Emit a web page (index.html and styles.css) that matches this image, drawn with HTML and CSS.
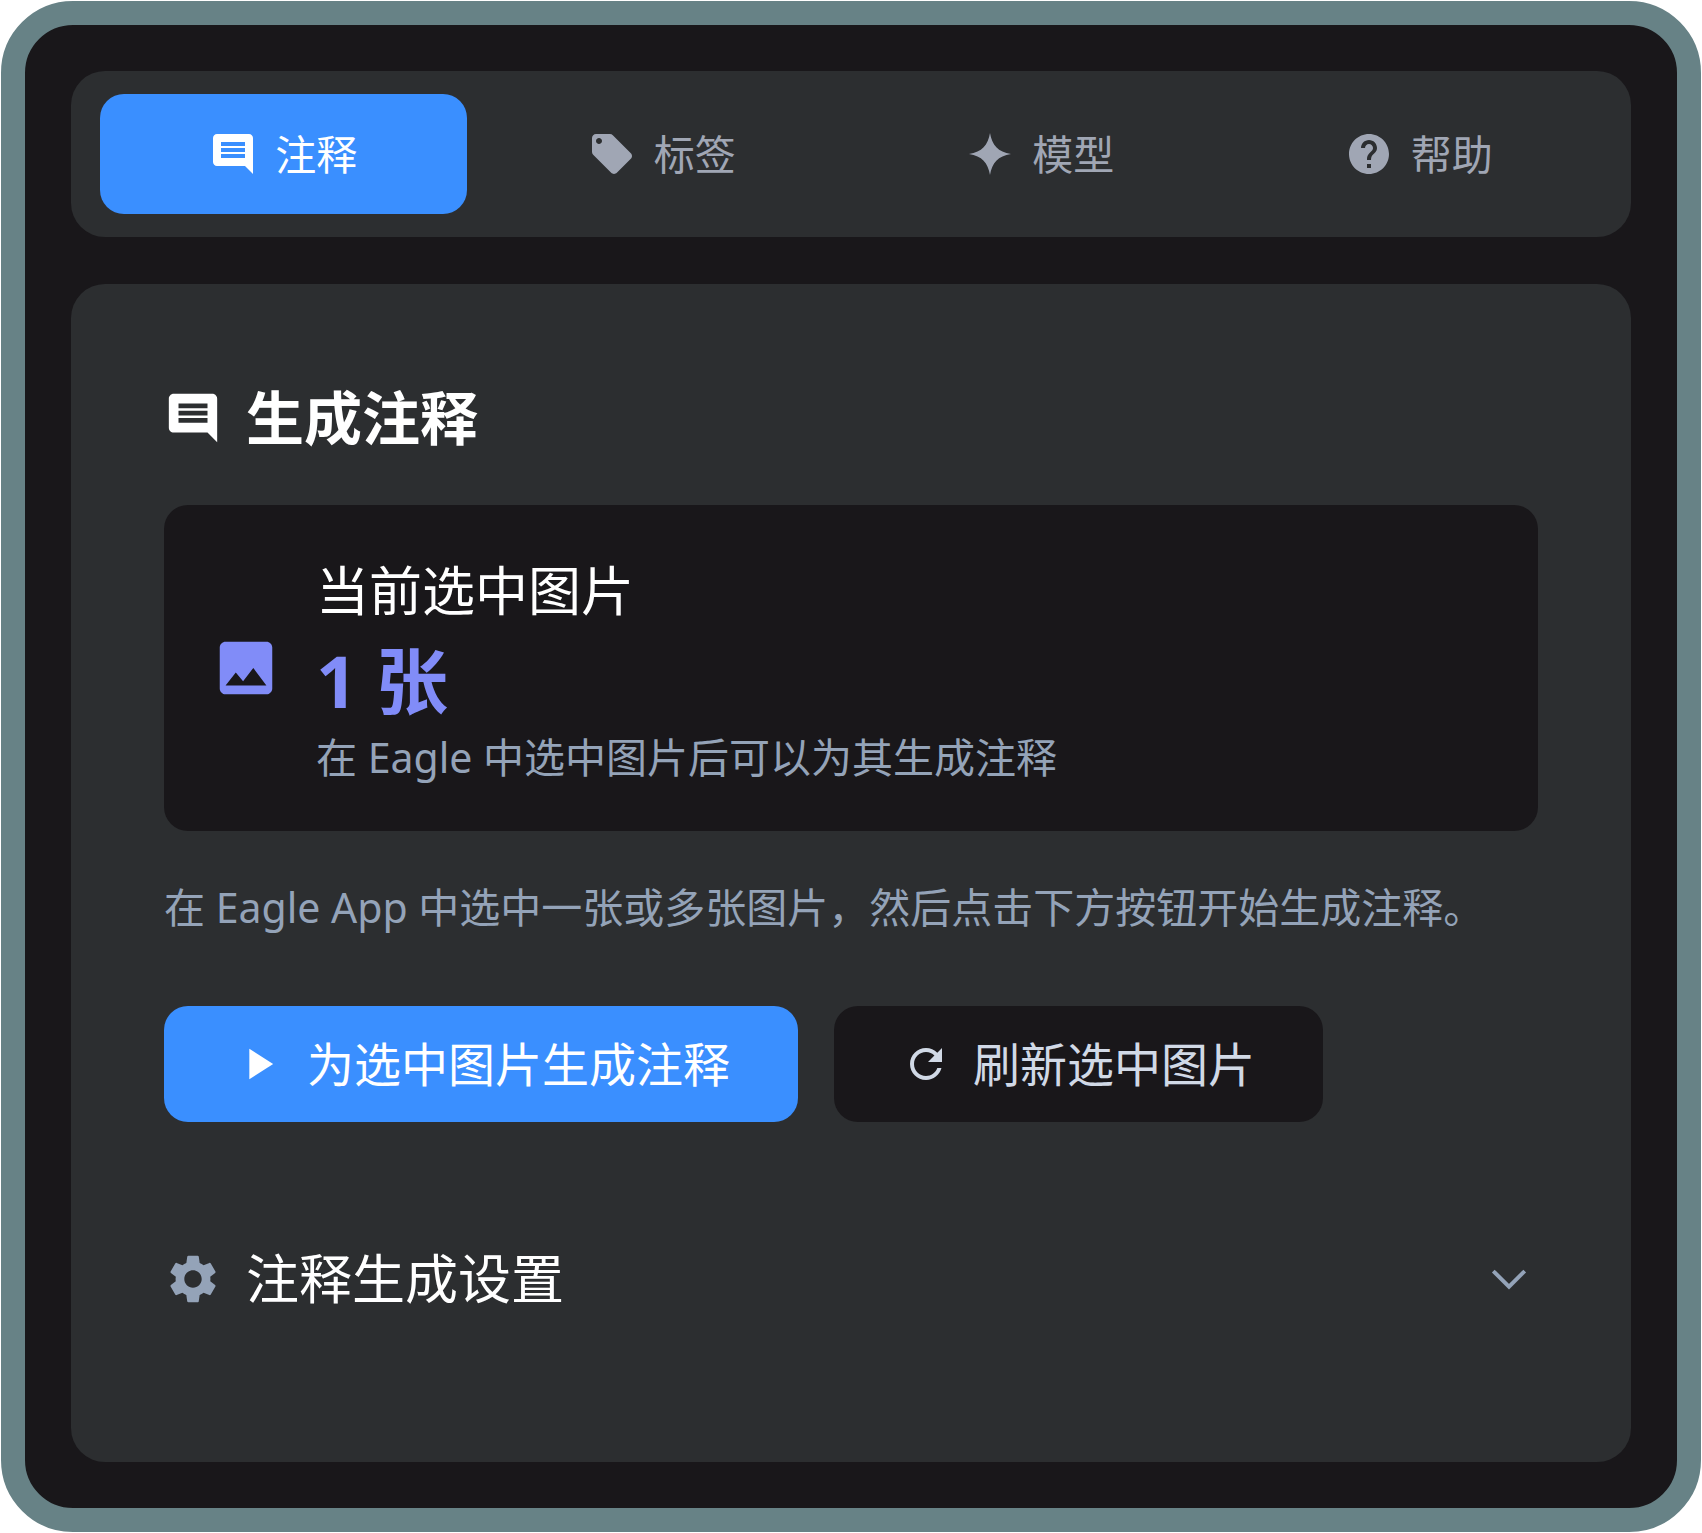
FILE: index.html
```html
<!DOCTYPE html>
<html lang="zh-CN">
<head>
<meta charset="UTF-8" />
<meta name="viewport" content="width=device-width, initial-scale=1" />
<title>生成注释</title>
<link rel="stylesheet" href="styles.css">
</head>
<body>

<div class="window">

  <!-- 顶部标签栏 -->
  <nav class="tabs">
    <button class="tab active" type="button">
      <svg class="icon" viewBox="0 0 24 24"><path d="M22 4c0-1.1-.9-2-2-2H4c-1.1 0-2 .9-2 2v12c0 1.1.9 2 2 2h14l4 4V4zM18 14H6v-2h12v2zm0-3H6V9h12v2zm0-3H6V6h12v2z"/></svg>
      注释
    </button>
    <button class="tab" type="button">
      <svg class="icon" viewBox="0 0 24 24"><path d="M21.41 11.58l-9-9C12.05 2.22 11.55 2 11 2H4c-1.1 0-2 .9-2 2v7c0 .55.22 1.05.59 1.42l9 9c.36.36.86.58 1.41.58.55 0 1.05-.22 1.41-.59l7-7c.37-.36.59-.86.59-1.41 0-.55-.23-1.06-.59-1.42zM5.5 7C4.67 7 4 6.33 4 5.5S4.67 4 5.5 4 7 4.67 7 5.5 6.33 7 5.5 7z"/></svg>
      标签
    </button>
    <button class="tab" type="button">
      <svg class="icon" viewBox="0 0 24 24"><path d="M12 1.500C13 7.500 16 11 22.500 12C16 13 13 16.500 12 22.500C11 16.500 8 13 1.500 12C8 11 11 7.500 12 1.500z"/></svg>
      模型
    </button>
    <button class="tab" type="button">
      <svg class="icon" viewBox="0 0 24 24"><path d="M12 2C6.48 2 2 6.48 2 12s4.480 10 10 10 10-4.480 10-10S17.52 2 12 2zm1 17h-2v-2h2v2zm2.070-7.750l-.9.92C13.450 12.900 13 13.500 13 15h-2v-.5c0-1.100.45-2.100 1.170-2.830l1.240-1.260c.37-.36.59-.86.59-1.410 0-1.100-.9-2-2-2s-2 .9-2 2H8c0-2.210 1.790-4 4-4s4 1.790 4 4c0 .88-.36 1.680-.93 2.250z"/></svg>
      帮助
    </button>
  </nav>

  <main class="panel">
    <h1 class="title">
      <svg class="icon icon-lg" viewBox="0 0 24 24"><path d="M22 4c0-1.1-.9-2-2-2H4c-1.1 0-2 .9-2 2v12c0 1.1.9 2 2 2h14l4 4V4zM18 14H6v-2h12v2zm0-3H6V9h12v2zm0-3H6V6h12v2z"/></svg>
      生成注释
    </h1>

    <!-- 选中图片信息 -->
    <section class="selection">
      <svg class="icon icon-image" viewBox="0 0 24 24"><path d="M21 19V5c0-1.1-.9-2-2-2H5c-1.1 0-2 .9-2 2v14c0 1.1.9 2 2 2h14c1.1 0 2-.9 2-2zM8.5 13.500l2.500 3.010L14.500 12l4.500 6H5l3.500-4.500z"/></svg>
      <div class="selection-text">
        <div class="selection-label">当前选中图片</div>
        <div class="selection-count">1 张</div>
        <div class="selection-hint">在 Eagle 中选中图片后可以为其生成注释</div>
      </div>
    </section>

    <p class="description">在 Eagle App 中选中一张或多张图片，然后点击下方按钮开始生成注释。</p>

    <div class="actions">
      <button class="btn btn-primary" type="button">
        <svg class="icon icon-play" viewBox="0 0 24 24"><path d="M8 5v14l11-7z"/></svg>
        为选中图片生成注释
      </button>
      <button class="btn btn-secondary" type="button">
        <svg class="icon" viewBox="0 0 24 24"><path d="M17.650 6.350C16.200 4.900 14.210 4 12 4c-4.420 0-7.990 3.580-7.990 8s3.570 8 7.990 8c3.730 0 6.840-2.550 7.730-6h-2.080c-.82 2.330-3.040 4-5.650 4-3.310 0-6-2.690-6-6s2.690-6 6-6c1.660 0 3.140.69 4.220 1.780L13 11h7V4l-2.350 2.350z"/></svg>
        刷新选中图片
      </button>
    </div>

    <button class="settings" type="button" aria-expanded="false">
      <svg class="icon icon-lg" viewBox="0 0 24 24"><path d="M19.140 12.940c.04-.3.06-.61.06-.94 0-.32-.02-.64-.07-.94l2.030-1.580c.18-.14.23-.41.12-.61l-1.920-3.320c-.12-.22-.37-.29-.59-.22l-2.390.96c-.5-.38-1.030-.7-1.620-.94l-.36-2.540c-.04-.24-.24-.41-.48-.41h-3.840c-.24 0-.43.17-.47.41l-.36 2.540c-.59.24-1.130.57-1.620.94l-2.390-.96c-.22-.08-.47 0-.59.22L2.740 8.870c-.12.21-.08.47.12.61l2.030 1.580c-.05.3-.09.63-.09.94s.02.64.07.94l-2.030 1.580c-.18.14-.23.41-.12.61l1.920 3.320c.12.22.37.29.59.22l2.390-.96c.5.38 1.030.7 1.620.94l.36 2.540c.05.24.24.41.48.41h3.840c.24 0 .44-.17.47-.41l.36-2.540c.59-.24 1.130-.56 1.620-.94l2.390.96c.22.08.47 0 .59-.22l1.920-3.320c.12-.22.07-.47-.12-.61l-2.010-1.580zM12 15.600c-1.980 0-3.600-1.620-3.600-3.600s1.620-3.600 3.600-3.600 3.600 1.620 3.600 3.600-1.620 3.600-3.600 3.600z"/></svg>
      <span class="settings-label">注释生成设置</span>
      <svg class="icon icon-lg chevron" viewBox="0 0 24 24"><path d="M5.500 8.700l6.500 6.500L18.500 8.700"/></svg>
    </button>
  </main>

</div>

</body>
</html>
```
FILE: styles.css
```css
* {
  box-sizing: border-box;
}
body {
  margin: 0;
  padding: 1px;
  min-height: 100vh;
  display: flex;
  background: #fff;
  font-family: "Noto Sans", "Noto Sans CJK SC", sans-serif;
}
button {
  border: none;
  font-family: inherit;
  cursor: pointer;
}
.window {
  flex: 1;
  display: flex;
  flex-direction: column;
  gap: 47px;
  padding: 46px;
  border: 24px solid #678286;
  border-radius: 72px;
  background: #19171a;
}

.icon {
  flex: none;
  width: 48px;
  height: 48px;
  fill: currentColor;
}
.icon-lg {
  width: 58px;
  height: 58px;
}

/* 标签栏 */
.tabs {
  display: flex;
  gap: 12px;
  padding: 23px 29px;
  border-radius: 34px;
  background: #2c2e30;
}
.tab {
  flex: 1;
  display: flex;
  align-items: center;
  justify-content: center;
  gap: 18px;
  height: 120px;
  padding: 0;
  border-radius: 24px;
  background: transparent;
  color: #a0a6b4;
  font-size: 41px;
  line-height: 56px;
}
.tab.active {
  background: #3a8fff;
  color: #fff;
}

/* 内容区 */
.panel {
  flex: 1;
  display: flex;
  flex-direction: column;
  padding: 93px;
  padding-bottom: 46px;
  border-radius: 34px;
  background: #2c2e30;
}
.title {
  display: flex;
  align-items: center;
  gap: 24px;
  margin: 0 0 46px;
  color: #fff;
  font-size: 58px;
  font-weight: bold;
  line-height: 82px;
}
.selection {
  display: flex;
  align-items: center;
  gap: 35px;
  padding: 47px;
  border-radius: 24px;
  background: #19171a;
}
.icon-image {
  width: 70px;
  height: 70px;
  color: #818cf8;
}
.selection-label {
  color: #fff;
  font-size: 53px;
  line-height: 78px;
}
.selection-count {
  color: #818cf8;
  font-size: 72px;
  font-weight: bold;
  line-height: 100px;
}
.selection-hint {
  color: #94a3b8;
  font-size: 41px;
  line-height: 54px;
}
.description {
  margin: 46px 0 69px;
  color: #94a3b8;
  font-size: 41px;
  line-height: 60px;
}

/* 按钮 */
.actions {
  display: flex;
  flex-wrap: wrap;
  gap: 36px;
}
.btn {
  display: flex;
  align-items: center;
  gap: 23px;
  height: 116px;
  padding: 0 68px;
  border-radius: 24px;
  font-size: 47px;
  line-height: 60px;
}
.btn-primary {
  background: #3a8fff;
  color: #fff;
}
.btn-secondary {
  background: #19171a;
  color: #d1d9e6;
}
.icon-play {
  width: 52px;
  height: 52px;
}

/* 设置折叠栏 */
.settings {
  display: flex;
  align-items: center;
  gap: 24px;
  margin-top: 117px;
  padding: 0;
  background: transparent;
  color: #94a3b8;
  font-size: 53px;
  line-height: 80px;
  text-align: left;
}
.settings-label {
  flex: 1;
  color: #fff;
}
.chevron {
  fill: none;
  stroke: currentColor;
  stroke-width: 1.6;
}
```
